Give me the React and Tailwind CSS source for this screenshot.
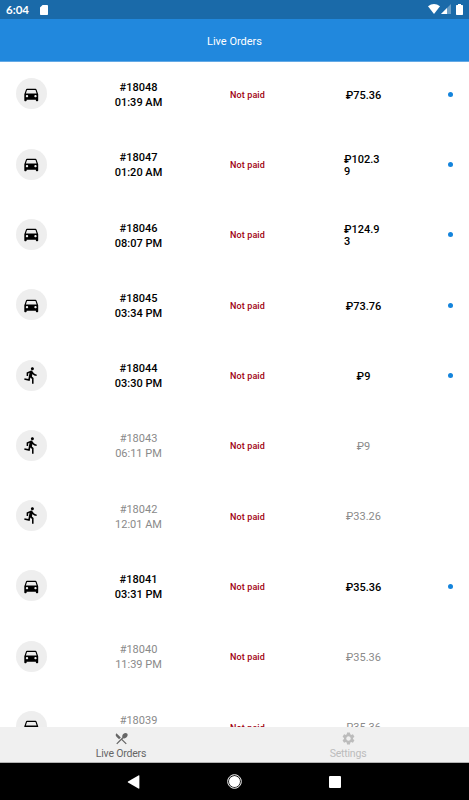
import React from 'react';
import { MdDirectionsCar, MdDirectionsRun, MdRestaurantMenu, MdSettings } from 'react-icons/md';

const orders = [
    { id: '#18048', time: '01:39 AM', price: '₽75.36', type: 'car', isNew: true },
    { id: '#18047', time: '01:20 AM', price: '₽102.39', type: 'car', isNew: true },
    { id: '#18046', time: '08:07 PM', price: '₽124.93', type: 'car', isNew: true },
    { id: '#18045', time: '03:34 PM', price: '₽73.76', type: 'car', isNew: true },
    { id: '#18044', time: '03:30 PM', price: '₽9', type: 'run', isNew: true },
    { id: '#18043', time: '06:11 PM', price: '₽9', type: 'run', isNew: false },
    { id: '#18042', time: '12:01 AM', price: '₽33.26', type: 'run', isNew: false },
    { id: '#18041', time: '03:31 PM', price: '₽35.36', type: 'car', isNew: true },
    { id: '#18040', time: '11:39 PM', price: '₽35.36', type: 'car', isNew: false },
    { id: '#18039', price: '₽35.36', type: 'car', isNew: false }
];

function StatusBar() {
    return (
        <div className="flex h-[19px] shrink-0 items-center bg-[#1a6aa9] pl-[6px] pr-[6px] text-white">
            <span className="w-[23px] font-['Lato',sans-serif] text-[11.5px] font-bold leading-none">6:04</span>
            <svg className="ml-[11px] h-[10px] w-[8px]" viewBox="0 0 8 10" fill="currentColor">
                <path d="M2.6 0H7.2Q8 0 8 .8V9.2Q8 10 7.2 10H.8Q0 10 0 9.2V2.6Z" />
            </svg>
            <div className="ml-auto flex items-center pb-px">
                <svg className="h-[10px] w-[12px]" viewBox="0 0 12 10" fill="currentColor">
                    <path d="M0 2.2Q6-2 12 2.2L6 10Z" />
                </svg>
                <svg className="ml-px h-[10px] w-[10px]" viewBox="0 0 10 10" fill="currentColor">
                    <path d="M10 0V10H0Z" opacity=".35" />
                    <path d="M6 4V10H0Z" />
                </svg>
                <svg className="ml-[5px] h-[11px] w-[7px]" viewBox="0 0 7 11" fill="currentColor">
                    <path d="M2 0H5V1H6.3Q7 1 7 1.7V10.3Q7 11 6.3 11H.7Q0 11 0 10.3V1.7Q0 1 .7 1H2Z" />
                </svg>
            </div>
        </div>
    );
}

function OrderRow({ order }) {
    const Icon = order.type === 'car' ? MdDirectionsCar : MdDirectionsRun;
    const textClass = order.isNew ? 'font-medium text-black' : 'font-normal text-[#8a8a8a]';

    return (
        <div className="flex h-[70.3px] shrink-0 items-start pl-[15.5px] pt-[16.4px]">
            <div className="flex size-[31px] shrink-0 items-center justify-center rounded-full bg-[#eeeeee]">
                <Icon className="size-[18.5px] text-black" />
            </div>
            <div className={`ml-[46px] flex w-[92px] shrink-0 flex-col pt-[1.6px] text-center text-[11px] leading-[15px] ${textClass}`}>
                <span>{order.id}</span>
                {order.time && <span>{order.time}</span>}
            </div>
            <div className="ml-[17px] w-[92px] shrink-0 pt-[10.5px] text-center text-[9px] font-medium leading-[13px] tracking-[0.1px] text-[#a0000f]">
                Not paid
            </div>
            <div className="ml-[50.5px] flex h-[35px] w-[39px] shrink-0 items-center justify-center">
                <span className={`break-all text-[11px] leading-[12.5px] ${textClass}`}>{order.price}</span>
            </div>
            {order.isNew && <span className="ml-[64.5px] mt-[13.3px] size-[5px] shrink-0 rounded-full bg-[#1484dc]" />}
        </div>
    );
}

function TabBar() {
    return (
        <div className="flex h-[36px] shrink-0 border-b border-[#b4b4b4] bg-[#f0f0f0] text-[10.5px] leading-[16px] tracking-[-0.2px]">
            <div className="flex w-[242px] flex-col items-center pt-[4px] text-[#666666]">
                <MdRestaurantMenu className="size-[15px]" />
                <span>Live Orders</span>
            </div>
            <div className="flex w-[212px] flex-col items-center pt-[4px] text-[#bcbcbc]">
                <MdSettings className="size-[15px]" />
                <span>Settings</span>
            </div>
        </div>
    );
}

function NavBar() {
    return (
        <div className="flex h-[37px] shrink-0 items-center bg-black pl-[127px] text-white">
            <svg className="h-[14px] w-[13px]" viewBox="0 0 13 14" fill="currentColor">
                <path d="M11.4.5Q12.4 0 12.4 1V13Q12.4 14 11.4 13.5L1 7.5Q.4 7 1 6.5Z" />
            </svg>
            <svg className="ml-[87px] size-[15px]" viewBox="0 0 15 15" fill="none">
                <circle cx="7.5" cy="7.5" r="6.8" stroke="currentColor" />
                <circle cx="7.5" cy="7.5" r="5.5" fill="currentColor" />
            </svg>
            <span className="ml-[86.5px] size-[12px] rounded-[1px] bg-white" />
        </div>
    );
}

export default function App() {
    return (
        <div className="flex h-[800px] w-[469px] flex-col overflow-hidden bg-white font-['Roboto',sans-serif]">
            <StatusBar />
            <div className="flex h-[43px] shrink-0 items-center justify-center border-b border-[#64a9e5] bg-[#2188dd] pt-[4px] text-[11px] text-white">
                Live Orders
            </div>
            <div className="flex min-h-0 flex-1 flex-col overflow-hidden">
                {orders.map(order => (
                    <OrderRow key={order.id} order={order} />
                ))}
            </div>
            <TabBar />
            <NavBar />
        </div>
    );
}
